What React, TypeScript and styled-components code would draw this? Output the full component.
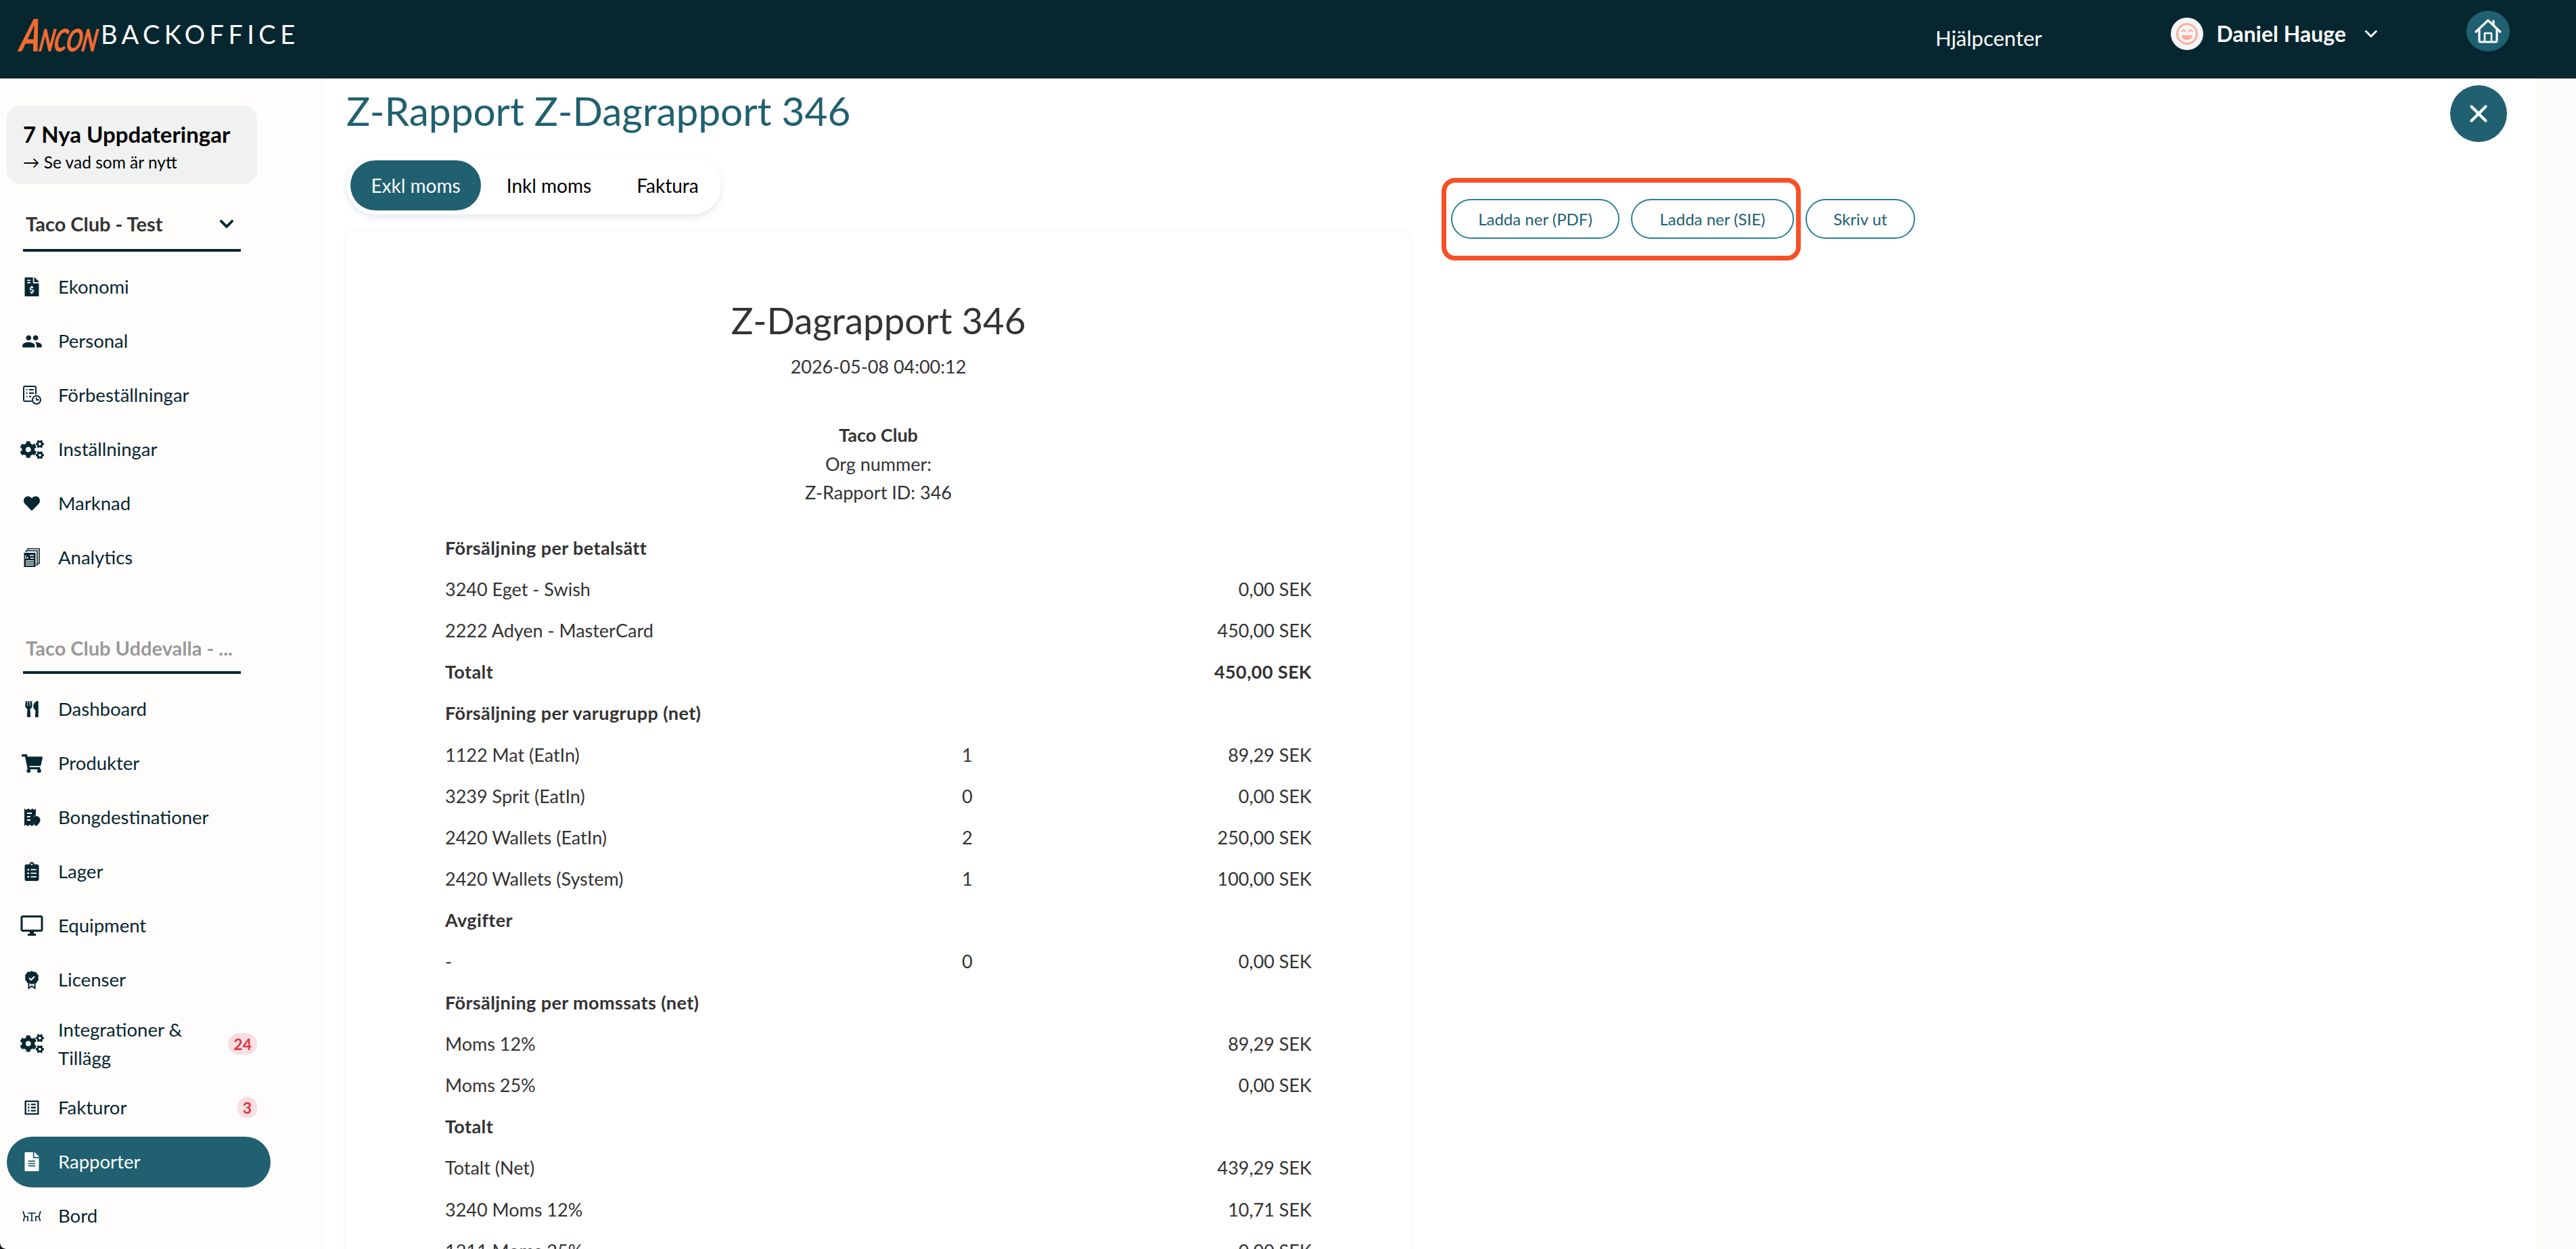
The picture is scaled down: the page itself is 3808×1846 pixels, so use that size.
import React from "react";
import styled, { createGlobalStyle } from "styled-components";
import {
  FaFileInvoiceDollar, FaCogs, FaHeart, FaUtensils, FaShoppingCart, FaClipboardList, FaFileAlt, FaChevronDown,
} from "react-icons/fa";
import { MdPeople, MdOutlineDesktopWindows, MdOutlineListAlt } from "react-icons/md";
import { X, ChevronDown } from "lucide-react";

const DARK = "#062730";
const TEAL = "#206070";

const Global = createGlobalStyle`
  html, body { margin: 0; padding: 0; background: #fff; }
  body { font-family: "Lato", "Open Sans", sans-serif; color: #333; }
  #root { height: 1846px; overflow: hidden; position: relative; }
  * { box-sizing: border-box; }
`;

const Page = styled.div`display: flex; flex-direction: column; height: 1846px; overflow: hidden; position: relative;`;
const Header = styled.header`
  flex: 0 0 116px; display: flex; align-items: flex-start; background: ${DARK}; color: #fff;
`;
const Logo = styled.div`
  display: flex; align-items: center; margin: 0 0 0 32px; height: 100px; width: 430px;
`;
const LogoMark = styled.div`
  display: inline-flex; align-items: baseline; color: #f26b30; font-weight: 900; font-style: italic;
  transform: skewX(-10deg) scaleX(.68); transform-origin: left center; width: 117px; white-space: nowrap;
  line-height: 1; margin-top: 2px;
`;
const LogoBig = styled.span`font-size: 66px; letter-spacing: -2px;`;
const LogoSmall = styled.span`font-size: 46px; letter-spacing: -1px;`;
const LogoWord = styled.span`
  font-size: 38px; font-weight: 400; letter-spacing: 6.4px; color: #fff; line-height: 1; white-space: nowrap;
`;
const HeaderRight = styled.div`margin-left: auto; display: flex; align-items: flex-start;`;
const HelpLink = styled.span`font-size: 31px; line-height: 40px; margin-top: 36px; margin-right: 190px;`;
const UserMenu = styled.div`display: flex; align-items: center; height: 48px; margin-top: 26px; margin-right: 126px;`;
const Avatar = styled.div`
  width: 48px; height: 48px; border-radius: 50%; background: #f6f6f8; display: flex; align-items: center; justify-content: center;
`;
const UserName = styled.span`font-size: 32px; font-weight: 700; margin-left: 20px; margin-right: 22px; line-height: 48px;`;
const HomeButton = styled.div`
  width: 64px; height: 60px; border-radius: 50%; background: ${TEAL}; margin-top: 16px; margin-right: 98px;
  display: flex; align-items: center; justify-content: center;
`;

const Body = styled.div`flex: 1; display: flex; min-height: 0;`;
const Sidebar = styled.aside`flex: 0 0 478px; background: #fffcfc; padding-top: 40px; overflow: hidden;`;
const UpdateCard = styled.div`
  width: 370px; height: 116px; margin-left: 10px; background: #f0f1f1; border-radius: 20px; padding: 22px 0 0 24px;
`;
const UpdateTitle = styled.div`font-size: 33px; font-weight: 700; color: #000; line-height: 40px; white-space: nowrap;`;
const UpdateSub = styled.div`font-size: 24.500px; color: #000; line-height: 30px; margin-top: 7px; white-space: nowrap;`;
const Selector = styled.div<{ $muted?: boolean; $top: number }>`
  width: 322px; height: 72px; margin: ${p => p.$top}px 0 0 34px; border-bottom: 4px solid ${DARK};
  display: flex; align-items: center; justify-content: space-between; padding: 0 9px ${p => (p.$muted ? 0 : 6)}px 4px;
  font-size: 29px; font-weight: 700; line-height: 36px; color: ${p => (p.$muted ? "#999" : "#333")}; white-space: nowrap;
`;
const NavList = styled.nav`display: flex; flex-direction: column; gap: 5px; width: 390px; margin: 14.5px 0 0 10px;`;
const NavItem = styled.div<{ $active?: boolean; $tall?: boolean }>`
  display: flex; align-items: center; height: ${p => (p.$tall ? 104 : 75)}px; padding: 0 20px 0 7px; border-radius: 38px;
  background: ${p => (p.$active ? TEAL : "transparent")}; color: ${p => (p.$active ? "#fff" : DARK)};
  font-size: 27.500px; line-height: 42px;
`;
const NavIcon = styled.span`flex: 0 0 60px; display: flex; align-items: center; justify-content: center; margin-right: 9px;`;
const NavLabel = styled.span`flex: 1; min-width: 0;`;
const Badge = styled.span`
  flex: none; min-width: 29px; height: 32px; padding: 0 8px; border-radius: 16px; background: #f8dfe1; color: #dc3545;
  font-size: 23px; font-weight: 700; line-height: 32px; text-align: center;
`;

const Main = styled.main`
  flex: 1; min-width: 0; background: #fff; padding: 10px 44px 0 34px; box-shadow: -3px 0 6px rgba(0,0,0,.025);
`;
const Strip = styled.div`flex: 0 0 58px; background: #fdfafa;`;
const TitleRow = styled.div`display: flex; justify-content: space-between; align-items: flex-start;`;
const Title = styled.h1`margin: 0; font-size: 58.500px; line-height: 74px; font-weight: 400; color: ${TEAL}; white-space: nowrap;`;
const CloseButton = styled.div`
  width: 84px; height: 84px; border-radius: 50%; background: ${TEAL}; color: #fff;
  display: flex; align-items: center; justify-content: center;
`;
const Columns = styled.div`display: flex; align-items: flex-start; margin-top: 21px;`;
const LeftColumn = styled.div`flex: 0 0 1573px;`;
const Tabs = styled.div`
  display: flex; width: 554px; height: 86px; padding: 6px; background: #fff; border-radius: 43px;
  box-shadow: 0 4px 10px rgba(30, 50, 80, .12);
`;
const Tab = styled.div<{ $active?: boolean; $width: number }>`
  flex: 0 0 ${p => p.$width}px; height: 74px; border-radius: 37px; display: flex; align-items: center; justify-content: center;
  font-size: 28px; color: ${p => (p.$active ? "#fff" : "#000")}; background: ${p => (p.$active ? TEAL : "transparent")};
`;
const ReportCard = styled.section`
  margin-top: 25px; height: 1600px; background: #fff; border-radius: 14px; padding: 91px 146px 0 146px;
  box-shadow: 0 0 8px rgba(30, 50, 80, .07);
`;
const ReportTitle = styled.h2`margin: 0; text-align: center; font-size: 54.500px; line-height: 80px; font-weight: 400; color: #333;`;
const ReportDate = styled.div`margin-top: 9px; text-align: center; font-size: 27px; line-height: 40px; color: #333;`;
const Company = styled.div`margin-top: 60px; text-align: center; font-size: 27px; line-height: 42.500px; color: #333;`;
const CompanyName = styled.div`font-weight: 700;`;
const Table = styled.div`margin-top: 30px;`;
const Row = styled.div<{ $bold?: boolean }>`
  display: grid; grid-template-columns: 764px 1fr auto; align-items: center; height: 61.100px;
  font-size: 27px; line-height: 40px; color: #333; font-weight: ${p => (p.$bold ? 700 : 400)};
  letter-spacing: ${p => (p.$bold ? 0.4 : 0)}px;
`;
const Actions = styled.div`position: relative; display: flex; gap: 17px; margin-left: 60px; padding-top: 63px;`;
const ActionButton = styled.button<{ $width: number }>`
  width: ${p => p.$width}px; height: 59px; border: 2px solid #2a8092; border-radius: 30px; background: #fff; color: ${TEAL};
  font-family: inherit; font-size: 24px; padding: 0; line-height: 1;
`;
const Highlight = styled.div`
  position: absolute; left: -14px; top: 32px; width: 531px; height: 122px; border: 7px solid #f84f27; border-radius: 20px; pointer-events: none;
`;
const Corner = styled.div`
  position: absolute; left: 0; bottom: 0; width: 8px; height: 8px;
  background: radial-gradient(circle at 100% 0, transparent 7px, #111 8px);
`;

const Smile = () => (
  <svg width="34" height="34" viewBox="0 0 34 34" fill="none" stroke="#fbb09a" strokeWidth="3">
    <circle cx="17" cy="17" r="14.500" />
    <path d="M9 14l3-3 3 3M19 14l3-3 3 3" strokeWidth="2" />
    <path d="M9 19h16c0 5-4 7-8 7s-8-2-8-7z" fill="#fbb09a" stroke="none" />
  </svg>
);
const HomeIcon = () => (
  <svg width="40" height="36" viewBox="0 0 40 36" fill="none" stroke="#fff" strokeWidth="3.200" strokeLinecap="round" strokeLinejoin="round">
    <path d="M2 19L20 2l8 7.500V3M28 9.500L38 19" />
    <path d="M7 16v17a2 2 0 0 0 2 2h22a2 2 0 0 0 2-2V16" transform="translate(0 -1)" />
    <path d="M15 33V21h10v12" strokeWidth="2.600" />
  </svg>
);
const PreorderIcon = () => (
  <svg width="28" height="28" viewBox="0 0 28 28" fill="none" stroke={DARK} strokeWidth="2">
    <path d="M14 23H4a2 2 0 0 1-2-2V3a2 2 0 0 1 2-2h14a2 2 0 0 1 2 2v10" />
    <path d="M6 6h1.500M6 11h1.500M6 16h1.500M10 6h7M10 11h7M10 16h3" />
    <circle cx="21" cy="21" r="6" />
    <path d="M21 17.500V21h3.500" strokeWidth="1.800" />
  </svg>
);
const AnalyticsIcon = () => (
  <svg width="24" height="29" viewBox="0 0 24 29" fill="none" stroke={DARK} strokeWidth="1.600">
    <path d="M6 3V1h17v22h-2M3.500 6V4H20v21h-2" />
    <rect x="0.500" y="7" width="17" height="21" fill={DARK} stroke="none" />
    <path d="M3 11v5M6 13v3M9 11h6M10 15h5M3 19h12M3 22h12M3 25h12" stroke="#fffcfc" strokeWidth="1.400" />
  </svg>
);
const TicketIcon = () => (
  <svg width="25" height="26" viewBox="0 0 25 26">
    <path fill={DARK} d="M1 0l3 2 3-2 3 2 3-2 3 2 2-2v10a8 8 0 0 0-5 7c0 3 2 6 3 8l-1-1-3 2-3-2-3 2-3-2-2 2z" />
    <path d="M5 7h7M5 12h5M5 17h5" stroke="#fffcfc" strokeWidth="2" />
    <path fill={DARK} d="M18.500 11a6 6 0 0 1 6 6c0 3.500-3.500 7-6 9-2.500-2-6-5.500-6-9a6 6 0 0 1 6-6z" />
  </svg>
);
const LicenseIcon = () => (
  <svg width="20" height="27" viewBox="0 0 20 27">
    <path fill="none" stroke={DARK} strokeWidth="2" d="M5.500 15v10.500l4.500-3 4.500 3V15" />
    <path fill={DARK} d="M10 0l3 1.500 3.300.3 1.700 2.700 2 2.500-.5 3.300.5 3-2 2.500-1.700 2.700-3.300.3L10 20l-3-1.700-3.300-.3L2 15.300 0 12.800l.5-3L0 6.500l2-2.500 1.700-2.700L7 1.500z" />
    <path fill="none" stroke="#fffcfc" strokeWidth="2" d="M6 10.500l3 2.800 5-5" />
  </svg>
);
const TableIcon = () => (
  <svg width="28" height="15" viewBox="0 0 28 15" fill="none" stroke={DARK} strokeWidth="1.700">
    <path d="M1 0l2.500 8H8l0 7M3.500 8L1.500 15M27 0l-2.500 8H20l0 7M24.500 8l2 7" />
    <path d="M8 3h12M14 3v12M11 15h6" />
  </svg>
);

type NavEntry = { label: string; icon: React.ReactNode; badge?: string; active?: boolean; tall?: boolean };

const topNav: NavEntry[] = [
  { label: "Ekonomi", icon: <FaFileInvoiceDollar size={28} /> },
  { label: "Personal", icon: <MdPeople size={31} /> },
  { label: "Förbeställningar", icon: <PreorderIcon /> },
  { label: "Inställningar", icon: <FaCogs size={35} /> },
  { label: "Marknad", icon: <FaHeart size={24} /> },
  { label: "Analytics", icon: <AnalyticsIcon /> },
];
const siteNav: NavEntry[] = [
  { label: "Dashboard", icon: <FaUtensils size={24} /> },
  { label: "Produkter", icon: <FaShoppingCart size={31} /> },
  { label: "Bongdestinationer", icon: <TicketIcon /> },
  { label: "Lager", icon: <FaClipboardList size={28} /> },
  { label: "Equipment", icon: <MdOutlineDesktopWindows size={36} /> },
  { label: "Licenser", icon: <LicenseIcon /> },
  { label: "Integrationer & Tillägg", icon: <FaCogs size={35} />, badge: "24", tall: true },
  { label: "Fakturor", icon: <MdOutlineListAlt size={28} />, badge: "3" },
  { label: "Rapporter", icon: <FaFileAlt size={28} />, active: true },
  { label: "Bord", icon: <TableIcon /> },
];

const rows: { a: string; b?: string; c?: string; bold?: boolean }[] = [
  { a: "Försäljning per betalsätt", bold: true },
  { a: "3240 Eget - Swish", c: "0,00 SEK" },
  { a: "2222 Adyen - MasterCard", c: "450,00 SEK" },
  { a: "Totalt", c: "450,00 SEK", bold: true },
  { a: "Försäljning per varugrupp (net)", bold: true },
  { a: "1122 Mat (EatIn)", b: "1", c: "89,29 SEK" },
  { a: "3239 Sprit (EatIn)", b: "0", c: "0,00 SEK" },
  { a: "2420 Wallets (EatIn)", b: "2", c: "250,00 SEK" },
  { a: "2420 Wallets (System)", b: "1", c: "100,00 SEK" },
  { a: "Avgifter", bold: true },
  { a: "-", b: "0", c: "0,00 SEK" },
  { a: "Försäljning per momssats (net)", bold: true },
  { a: "Moms 12%", c: "89,29 SEK" },
  { a: "Moms 25%", c: "0,00 SEK" },
  { a: "Totalt", bold: true },
  { a: "Totalt (Net)", c: "439,29 SEK" },
  { a: "3240 Moms 12%", c: "10,71 SEK" },
  { a: "1211 Moms 25%", c: "0,00 SEK" },
];

const renderNav = (items: NavEntry[]) => (
  <NavList>
    {items.map(item => (
      <NavItem key={item.label} $active={item.active} $tall={item.tall}>
        <NavIcon>{item.icon}</NavIcon>
        <NavLabel>{item.label}</NavLabel>
        {item.badge && <Badge>{item.badge}</Badge>}
      </NavItem>
    ))}
  </NavList>
);

export default function App() {
  return (
    <Page>
      <Global />
      <Header>
        <Logo>
          <LogoMark>
            <LogoBig>A</LogoBig>
            <LogoSmall>NCON</LogoSmall>
          </LogoMark>
          <LogoWord>BACKOFFICE</LogoWord>
        </Logo>
        <HeaderRight>
          <HelpLink>Hjälpcenter</HelpLink>
          <UserMenu>
            <Avatar><Smile /></Avatar>
            <UserName>Daniel Hauge</UserName>
            <ChevronDown size={30} strokeWidth={2.400} color="#fff" />
          </UserMenu>
          <HomeButton><HomeIcon /></HomeButton>
        </HeaderRight>
      </Header>
      <Body>
        <Sidebar>
          <UpdateCard>
            <UpdateTitle>7 Nya Uppdateringar</UpdateTitle>
            <UpdateSub>→ Se vad som är nytt</UpdateSub>
          </UpdateCard>
          <Selector $top={28}>
            <span>Taco Club - Test</span>
            <FaChevronDown size={24} color={DARK} />
          </Selector>
          {renderNav(topNav)}
          <Selector $top={62.500} $muted>
            <span>Taco Club Uddevalla - ...</span>
          </Selector>
          {renderNav(siteNav)}
        </Sidebar>
        <Main>
          <TitleRow>
            <Title>Z-Rapport Z-Dagrapport 346</Title>
            <CloseButton><X size={42} strokeWidth={2.400} /></CloseButton>
          </TitleRow>
          <Columns>
            <LeftColumn>
              <Tabs>
                <Tab $active $width={193}>Exkl moms</Tab>
                <Tab $width={201}>Inkl moms</Tab>
                <Tab $width={150}>Faktura</Tab>
              </Tabs>
              <ReportCard>
                <ReportTitle>Z-Dagrapport 346</ReportTitle>
                <ReportDate>2026-05-08 04:00:12</ReportDate>
                <Company>
                  <CompanyName>Taco Club</CompanyName>
                  <div>Org nummer:</div>
                  <div>Z-Rapport ID: 346</div>
                </Company>
                <Table>
                  {rows.map((r, i) => (
                    <Row key={i} $bold={r.bold}>
                      <span>{r.a}</span>
                      <span>{r.b}</span>
                      <span>{r.c}</span>
                    </Row>
                  ))}
                </Table>
              </ReportCard>
            </LeftColumn>
            <Actions>
              <ActionButton $width={249}>Ladda ner (PDF)</ActionButton>
              <ActionButton $width={241}>Ladda ner (SIE)</ActionButton>
              <ActionButton $width={162}>Skriv ut</ActionButton>
              <Highlight />
            </Actions>
          </Columns>
        </Main>
        <Strip />
      </Body>
      <Corner />
    </Page>
  );
}
